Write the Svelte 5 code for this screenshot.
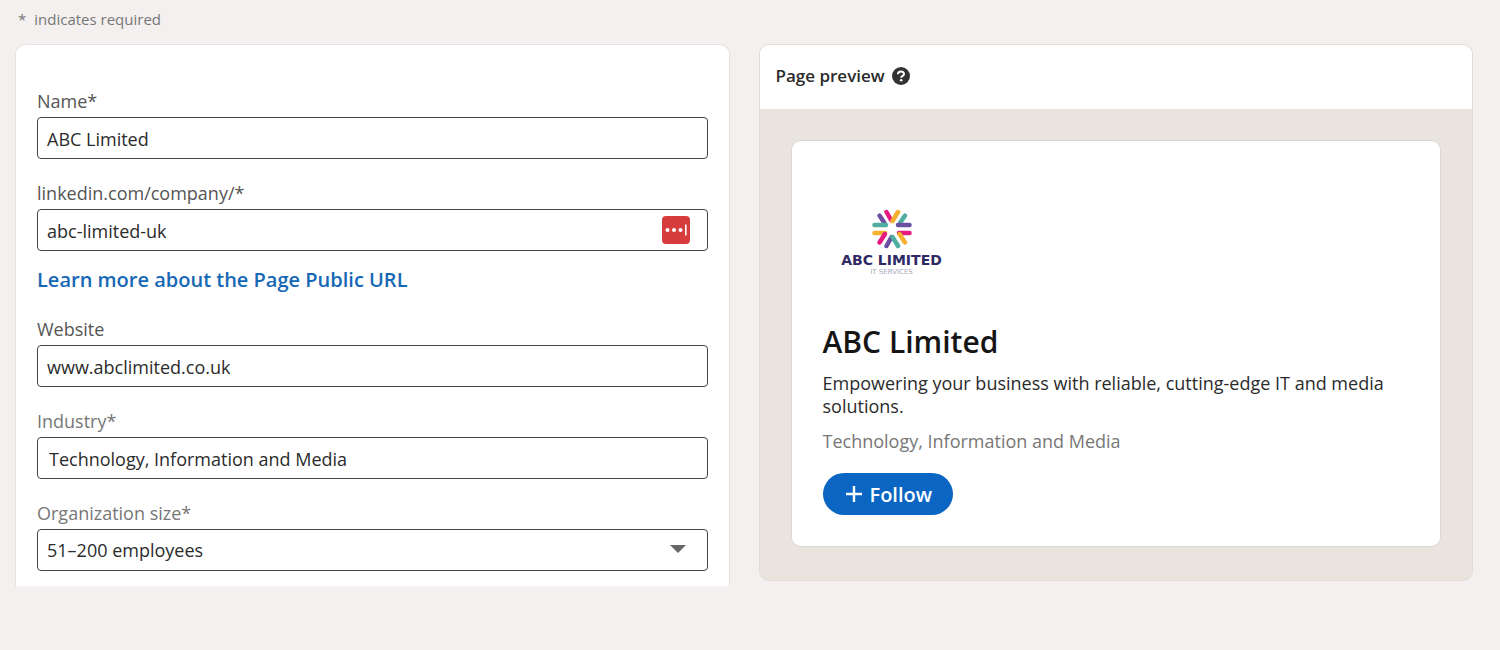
<script lang="ts">
    interface Spoke {
        color: string;
        d: string;
    }

    let name = $state('ABC Limited');
    let slug = $state('abc-limited-uk');
    let website = $state('www.abclimited.co.uk');
    let industry = $state('Technology, Information and Media');
    let size = $state('51–200 employees');

    const tagline =
        'Empowering your business with reliable, cutting-edge IT and media solutions.';

    const sizes = [
        '2–10 employees',
        '11–50 employees',
        '51–200 employees',
        '201–500 employees',
    ];

    // Logo burst, drawn on a 40x40 grid
    const spokes: Spoke[] = [
        { color: '#e5197f', d: 'M14.500 3 L19 11' },
        { color: '#f6b02f', d: 'M26 3 L20.500 12' },
        { color: '#6c4fa3', d: 'M7.500 6.500 L12.500 14' },
        { color: '#4fae9f', d: 'M33 6.500 L28 14' },
        { color: '#4fae9f', d: 'M2.500 16 H14' },
        { color: '#6c4fa3', d: 'M26 16 H37.500' },
        { color: '#f6b02f', d: 'M2.500 24 H13' },
        { color: '#e5197f', d: 'M37.500 24 H27' },
        { color: '#e5197f', d: 'M7.500 33.500 L13 25' },
        { color: '#f6b02f', d: 'M33 33.500 L27.500 25' },
        { color: '#6c4fa3', d: 'M14.500 37 L19.500 28' },
        { color: '#4fae9f', d: 'M26 37 L20.500 28' },
    ];
</script>

<main class="page">
    <p class="required-note"><span>*</span>indicates required</p>

    <div class="columns">
        <form class="details">
            <div class="field">
                <label for="name">Name*</label>
                <input id="name" type="text" bind:value={name} />
            </div>

            <div class="field">
                <label for="slug">linkedin.com/company/*</label>
                <div class="control">
                    <input id="slug" type="text" bind:value={slug} />
                    <button
                        type="button"
                        class="autofill"
                        aria-label="Fill from password manager"
                    >
                        <svg viewBox="0 0 28 28" width="28" height="28">
                            <rect width="28" height="28" rx="4" fill="#d73c3d" />
                            <g fill="#fff">
                                <circle cx="5.500" cy="14" r="2" />
                                <circle cx="12" cy="14" r="2" />
                                <circle cx="18.500" cy="14" r="2" />
                                <rect x="23" y="8.500" width="1.600" height="11" />
                            </g>
                        </svg>
                    </button>
                </div>
                <a class="learn-more" href="#public-url"
                    >Learn more about the Page Public URL</a
                >
            </div>

            <div class="field">
                <label for="website">Website</label>
                <input id="website" type="text" bind:value={website} />
            </div>

            <div class="field muted">
                <label for="industry">Industry*</label>
                <input
                    id="industry"
                    class="lookup"
                    type="text"
                    bind:value={industry}
                />
            </div>

            <div class="field muted">
                <label for="size">Organization size*</label>
                <div class="control">
                    <select id="size" bind:value={size}>
                        {#each sizes as option}
                            <option value={option}>{option}</option>
                        {/each}
                    </select>
                    <svg class="caret" viewBox="0 0 16 8" width="16" height="8">
                        <path d="M0 0 H16 L8 8 Z" fill="#666" />
                    </svg>
                </div>
            </div>
        </form>

        <section class="preview">
            <header>
                <h2>Page preview</h2>
                <button type="button" class="help" aria-label="About page preview">
                    <svg viewBox="0 0 18 18" width="18" height="18">
                        <circle cx="9" cy="9" r="9" fill="#333" />
                        <path
                            d="M6 7.200 C6 3.600 12 3.700 12 7 C12 8.900 9.200 8.900 9.200 10.800"
                            fill="none"
                            stroke="#fff"
                            stroke-width="2"
                        />
                        <circle cx="9.200" cy="13.300" r="1.300" fill="#fff" />
                    </svg>
                </button>
            </header>

            <div class="stage">
                <article class="company">
                    <div class="logo">
                        <svg viewBox="0 0 40 40" width="40" height="40">
                            {#each spokes as spoke}
                                <path
                                    d={spoke.d}
                                    fill="none"
                                    stroke={spoke.color}
                                    stroke-width="4.500"
                                    stroke-linecap="round"
                                />
                            {/each}
                        </svg>
                        <span class="logo-name">ABC LIMITED</span>
                        <span class="logo-sub">IT SERVICES</span>
                    </div>
                    <h1>{name}</h1>
                    <p class="tagline">{tagline}</p>
                    <p class="industry">{industry}</p>
                    <button type="button" class="follow">
                        <svg viewBox="0 0 16 16" width="16" height="16">
                            <path
                                d="M8 0 V16 M0 8 H16"
                                stroke="#fff"
                                stroke-width="2.400"
                            />
                        </svg>
                        Follow
                    </button>
                </article>
            </div>
        </section>
    </div>
</main>

<style>
    :global(body) {
        margin: 0;
        background: #f4f0ef;
    }

    .page {
        padding: 7px 27px 24px 15px;
        font-family: 'Segoe UI', 'Open Sans', 'Noto Sans', sans-serif;
        font-size: 18px;
        color: #2b2b2b;
    }

    .page * {
        box-sizing: border-box;
    }

    h1,
    h2,
    p {
        margin: 0;
    }

    button {
        padding: 0;
        border: 0;
        background: none;
        font: inherit;
        cursor: pointer;
    }

    svg {
        display: block;
    }

    .required-note {
        display: flex;
        gap: 8px;
        padding-left: 3px;
        margin-bottom: 13px;
        font-size: 15px;
        line-height: 24px;
        color: #777;
    }

    .columns {
        display: grid;
        grid-template-columns: 1fr 1fr;
        align-items: start;
        gap: 29px;
    }

    .details {
        display: flex;
        flex-direction: column;
        gap: 22px;
        padding: 44px 21px 15px;
        background: #fff;
        border: 1px solid #e6e1de;
        border-bottom: 0;
        border-radius: 10px 10px 0 0;
    }

    .field {
        display: flex;
        flex-direction: column;
        gap: 4px;
    }

    label {
        line-height: 24px;
        color: #555;
    }

    .muted label {
        color: #777;
    }

    input,
    select {
        display: block;
        width: 100%;
        height: 42px;
        padding: 2px 9px 0;
        border: 1px solid #444;
        border-radius: 4px;
        background: #fff;
        font: inherit;
        color: #2b2b2b;
        appearance: none;
    }

    select {
        padding-top: 0;
    }

    .lookup {
        padding-left: 11px;
    }

    .control {
        position: relative;
    }

    .autofill {
        position: absolute;
        top: 7px;
        right: 18px;
    }

    .caret {
        position: absolute;
        top: 16px;
        right: 22px;
        pointer-events: none;
    }

    .learn-more {
        align-self: flex-start;
        margin: 11px 0 1px;
        font-size: 20px;
        font-weight: 600;
        line-height: 28px;
        color: #1668b5;
        text-decoration: none;
    }

    .preview {
        overflow: hidden;
        background: #e9e4de;
        border: 1px solid #e0dbd6;
        border-radius: 10px;
    }

    .preview header {
        display: flex;
        align-items: center;
        gap: 7px;
        height: 64px;
        padding: 0 16px 2px;
        background: #fff;
    }

    h2 {
        font-size: 17px;
        font-weight: 600;
        line-height: 24px;
    }

    .stage {
        padding: 31px 31px 33px;
    }

    .company {
        padding: 63px 31px 31px;
        background: #fff;
        border: 1px solid #dcd7d1;
        border-radius: 10px;
    }

    .logo {
        display: flex;
        flex-direction: column;
        align-items: center;
        width: 138px;
        padding-top: 5px;
    }

    .logo-name {
        margin-top: 2px;
        font: bold 14px/18px 'DejaVu Sans', sans-serif;
        color: #2f2a66;
        white-space: nowrap;
    }

    .logo-sub {
        font: 7px/6px 'DejaVu Sans', sans-serif;
        color: #a9a7ba;
    }

    h1 {
        margin-top: 44px;
        font-size: 30px;
        font-weight: 600;
        line-height: 46px;
        color: #151515;
    }

    .tagline {
        margin-top: 7px;
        line-height: 23px;
    }

    .industry {
        margin-top: 11px;
        line-height: 24px;
        color: #777;
    }

    .follow {
        display: flex;
        align-items: center;
        gap: 8px;
        height: 42px;
        margin-top: 20px;
        padding: 0 21px 0 23px;
        border-radius: 21px;
        background: #0a66c2;
        font-size: 20px;
        font-weight: 600;
        color: #fff;
    }
</style>
